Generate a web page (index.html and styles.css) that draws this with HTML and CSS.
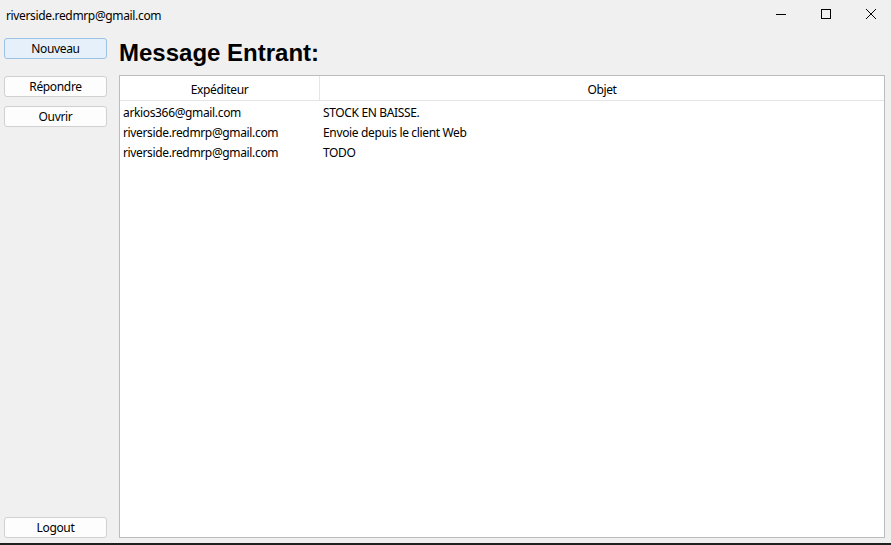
FILE: index.html
```html
<!DOCTYPE html>
<html lang="fr">
<head>
<meta charset="utf-8">
<title>Message Entrant</title>
<link rel="stylesheet" href="styles.css">
</head>
<body>
<div class="window">
  <div class="titlebar">
    <span class="title">riverside.redmrp@gmail.com</span>
    <div class="controls">
      <span class="ctl"><svg width="10" height="10" viewBox="0 0 10 10"><path d="M0 5.5H10" stroke="#000" stroke-width="1"/></svg></span>
      <span class="ctl"><svg width="10" height="10" viewBox="0 0 10 10"><rect x="0.5" y="0.5" width="9" height="9" fill="none" stroke="#000" stroke-width="1"/></svg></span>
      <span class="ctl"><svg width="10" height="10" viewBox="0 0 10 10"><path d="M0 0L10 10M10 0L0 10" stroke="#000" stroke-width="1"/></svg></span>
    </div>
  </div>
  <div class="main">
    <div class="sidebar">
      <button class="btn btn-default">Nouveau</button>
      <button class="btn btn-reply">Répondre</button>
      <button class="btn btn-open">Ouvrir</button>
      <button class="btn btn-logout">Logout</button>
    </div>
    <div class="content">
      <h1 class="heading">Message Entrant:</h1>
      <div class="table">
        <div class="thead">
          <div class="th th-from">Expéditeur</div>
          <div class="th th-subj">Objet</div>
        </div>
        <div class="row"><div class="td td-from">arkios366@gmail.com</div><div class="td td-subj">STOCK EN BAISSE.</div></div>
        <div class="row"><div class="td td-from">riverside.redmrp@gmail.com</div><div class="td td-subj">Envoie depuis le client Web</div></div>
        <div class="row"><div class="td td-from">riverside.redmrp@gmail.com</div><div class="td td-subj">TODO</div></div>
      </div>
    </div>
  </div>
  <div class="taskedge"></div>
</div>
</body>
</html>
```
FILE: styles.css
```css
* { box-sizing: border-box; }
html, body { margin: 0; padding: 0; }
body {
  width: 891px;
  height: 545px;
  overflow: hidden;
  background: #f0f0f0;
  font-family: "Noto Sans", "Open Sans", sans-serif;
  font-size: 12px;
  letter-spacing: -0.35px;
  color: #000;
}
.window {
  display: flex;
  flex-direction: column;
  height: 545px;
}
.titlebar {
  height: 30px;
  display: flex;
  align-items: center;
  justify-content: space-between;
  flex: none;
}
.title {
  padding-left: 6px;
  font-size: 12px;
}
.controls {
  display: flex;
  height: 30px;
  margin-right: -2px;
}
.ctl {
  width: 45px;
  height: 30px;
  display: flex;
  align-items: center;
  justify-content: center;
  padding-bottom: 2px;
}
.main {
  flex: 1;
  display: flex;
  min-height: 0;
}
.sidebar {
  width: 119px;
  padding: 8px 12px 5px 4px;
  display: flex;
  flex-direction: column;
}
.btn {
  display: block;
  width: 103px;
  height: 21px;
  padding: 1px 0 0;
  margin: 0;
  font-family: inherit;
  font-size: 12px;
  letter-spacing: -0.35px;
  color: #000;
  background: #fdfdfd;
  border: 1px solid #d0d0d0;
  border-radius: 3px;
  line-height: 18px;
}
.btn-default {
  background: #e6f0fa;
  border-color: #9cc3e6;
}
.btn-reply { margin-top: 17px; }
.btn-open { margin-top: 9px; }
.btn-logout { margin-top: auto; }
.content {
  flex: 1;
  display: flex;
  flex-direction: column;
  padding: 0 6px 5px 0;
  min-width: 0;
}
.heading {
  margin: 0;
  height: 45px;
  padding-top: 9px;
  font-family: "Liberation Sans", Arial, sans-serif;
  font-weight: bold;
  font-size: 24px;
  letter-spacing: 0;
  line-height: 28px;
}
.table {
  flex: 1;
  background: #fff;
  border: 1px solid #bcbcbc;
}
.thead {
  display: flex;
  height: 25px;
  border-bottom: 1px solid #e5e5e5;
}
.th {
  display: flex;
  align-items: center;
  justify-content: center;
  height: 24px;
  padding-top: 2px;
}
.th-from {
  width: 200px;
  border-right: 1px solid #e5e5e5;
}
.th-subj { flex: 1; }
.row {
  display: flex;
  height: 20px;
  align-items: center;
}
.td { white-space: nowrap; padding-top: 2px; }
.td-from { width: 200px; padding-left: 3px; }
.td-subj { flex: 1; padding-left: 3px; }
.taskedge {
  height: 2px;
  background: #202020;
  flex: none;
}
```
